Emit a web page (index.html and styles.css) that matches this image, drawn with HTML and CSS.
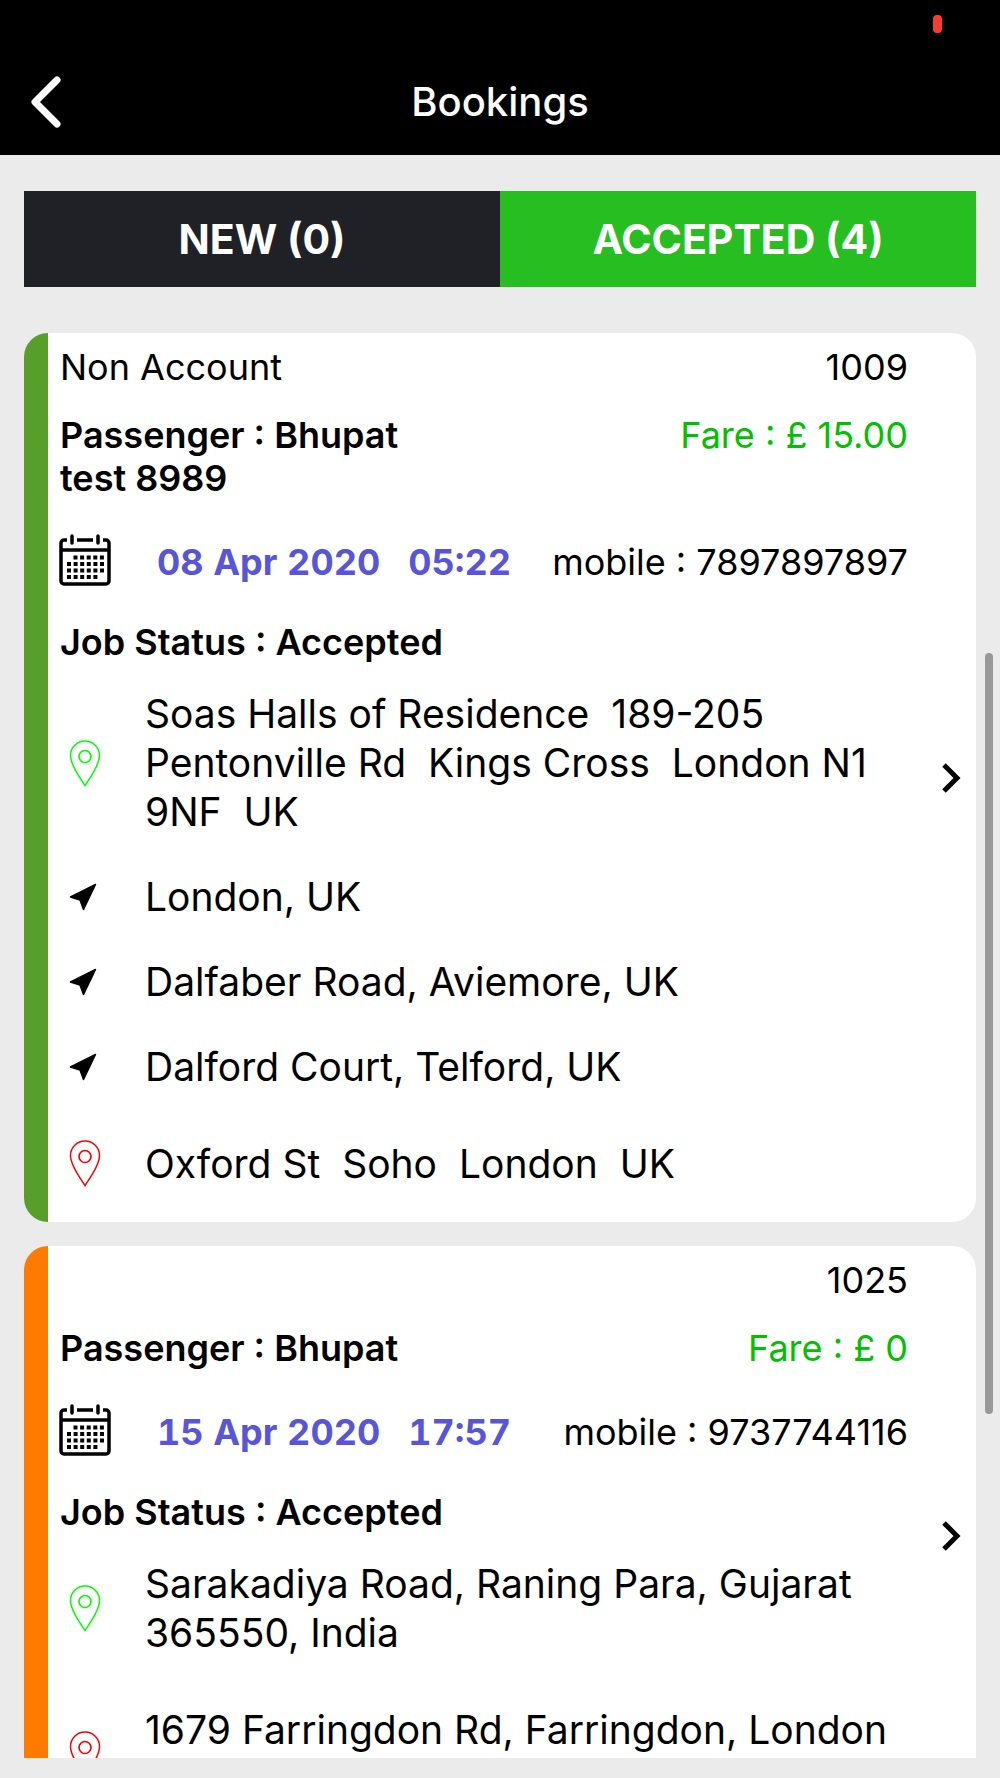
FILE: index.html
```
<!DOCTYPE html>
<html lang="en">
<head>
    <meta charset="UTF-8">
    <meta name="viewport" content="width=device-width, initial-scale=1.0">
    <title>Bookings</title>
    <link rel="stylesheet" href="styles.css">
</head>
<body>
    <!-- shared icons -->
    <svg class="icon-defs" aria-hidden="true">
        <symbol id="calendar" viewBox="0 0 52 52">
            <path d="M8 6H5a3 3 0 0 0-3 3v38a3 3 0 0 0 3 3h42a3 3 0 0 0 3-3V9a3 3 0 0 0-3-3h-3M18 6h16M2 16h48" fill="none" stroke="#000" stroke-width="3.500"/>
            <path d="M13 2v7M39 2v7" fill="none" stroke="#000" stroke-width="3.500" stroke-linecap="round"/>
            <path d="M14.500 23.500H46M8 30H46M8 36.500H46M8 43H40" fill="none" stroke="#000" stroke-width="4" stroke-dasharray="4 2.600"/>
        </symbol>
        <symbol id="pin" viewBox="0 0 32 48">
            <path d="M16 46.500C12 40 1.500 27 1.500 16.500a14.500 14.500 0 0 1 29 0C30.500 27 20 40 16 46.500Z" fill="none" stroke="currentColor" stroke-width="1.500"/>
            <circle cx="16" cy="17.500" r="6" fill="none" stroke="currentColor" stroke-width="1.700"/>
        </symbol>
        <symbol id="arrow" viewBox="0 0 28 28">
            <path d="M26.500 1.500 14.500 26.500 11 17 1.500 14Z" fill="#000" stroke="#000" stroke-width="1.500" stroke-linejoin="round"/>
        </symbol>
        <symbol id="chevron" viewBox="0 0 20 32">
            <path d="M3 3 16 16 3 29" fill="none" stroke="#000" stroke-width="5"/>
        </symbol>
    </svg>

    <header class="header">
        <div class="status-bar"><span class="recording"></span></div>
        <div class="nav">
            <button type="button" class="back" aria-label="Back">
                <svg width="32" height="52" viewBox="0 0 32 52"><path d="M27 4 5 26 27 48" fill="none" stroke="#fff" stroke-width="7" stroke-linecap="round" stroke-linejoin="round"/></svg>
            </button>
            <h1>Bookings</h1>
        </div>
    </header>

    <div class="tabs">
        <button type="button" class="tab">NEW (0)</button>
        <button type="button" class="tab active">ACCEPTED (4)</button>
    </div>

    <main class="bookings">
        <div class="list">
            <article class="card green">
                <div class="details">
                    <div class="row"><span>Non Account</span><span class="right">1009</span></div>
                    <div class="row"><strong class="passenger">Passenger : Bhupat test 8989</strong><span class="right fare">Fare : £ 15.00</span></div>
                    <div class="row when">
                        <svg class="calendar"><use href="#calendar"/></svg>
                        <span class="date">08 Apr 2020</span>
                        <span class="time">05:22</span>
                        <span class="right">mobile : 7897897897</span>
                    </div>
                    <div class="row job"><strong>Job Status : Accepted</strong></div>
                    <div class="stop pickup"><svg class="pin"><use href="#pin"/></svg><p>Soas Halls of Residence  189-205 Pentonville Rd  Kings Cross  London N1 9NF  UK</p></div>
                    <div class="stop via"><svg class="arrow"><use href="#arrow"/></svg><p>London, UK</p></div>
                    <div class="stop via"><svg class="arrow"><use href="#arrow"/></svg><p>Dalfaber Road, Aviemore, UK</p></div>
                    <div class="stop via"><svg class="arrow"><use href="#arrow"/></svg><p>Dalford Court, Telford, UK</p></div>
                    <div class="stop drop"><svg class="pin"><use href="#pin"/></svg><p>Oxford St  Soho  London  UK</p></div>
                </div>
                <button type="button" class="open" aria-label="Open booking 1009"><svg class="chevron"><use href="#chevron"/></svg></button>
            </article>

            <article class="card orange">
                <div class="details">
                    <div class="row"><span class="right">1025</span></div>
                    <div class="row"><strong class="passenger">Passenger : Bhupat</strong><span class="right fare">Fare : £ 0</span></div>
                    <div class="row when">
                        <svg class="calendar"><use href="#calendar"/></svg>
                        <span class="date">15 Apr 2020</span>
                        <span class="time">17:57</span>
                        <span class="right">mobile : 9737744116</span>
                    </div>
                    <div class="row job"><strong>Job Status : Accepted</strong></div>
                    <div class="stop pickup"><svg class="pin"><use href="#pin"/></svg><p>Sarakadiya Road, Raning Para, Gujarat 365550, India</p></div>
                    <div class="stop drop"><svg class="pin"><use href="#pin"/></svg><p>1679 Farringdon Rd, Farringdon, London</p></div>
                </div>
                <button type="button" class="open" aria-label="Open booking 1025"><svg class="chevron"><use href="#chevron"/></svg></button>
            </article>
        </div>
        <span class="scroll-thumb"></span>
    </main>
</body>
</html>
```
FILE: styles.css
```
* {
    box-sizing: border-box;
}
body {
    font-family: Inter, "Liberation Sans", sans-serif;
    margin: 0;
    height: 100vh;
    display: flex;
    flex-direction: column;
    overflow: hidden;
    background-color: #ebebeb;
    color: #000;
    font-size: 36px;
    line-height: 43px;
}
button {
    font-family: inherit;
    border: none;
    padding: 0;
    background: none;
    cursor: pointer;
}
.icon-defs {
    position: absolute;
    width: 0;
    height: 0;
}
.header {
    flex: none;
    background-color: #000;
    color: #fff;
}
.status-bar {
    height: 48px;
    padding: 15px 58px 0;
    display: flex;
    justify-content: flex-end;
}
.recording {
    width: 9px;
    height: 18px;
    border-radius: 4px;
    background-color: #ff3b30;
}
.nav {
    height: 107px;
    padding: 0 30px;
    display: grid;
    grid-template-columns: 60px 1fr 60px;
    align-items: center;
}
.back {
    display: flex;
}
.nav h1 {
    margin: 0;
    font-size: 40px;
    font-weight: 500;
    text-align: center;
}
.tabs {
    flex: none;
    display: flex;
    margin: 36px 24px 46px;
}
.tab {
    flex: 1;
    height: 96px;
    font-size: 41px;
    font-weight: 700;
    color: #fff;
    background-color: #202126;
}
.tab.active {
    background-color: #27be21;
}
.bookings {
    flex: 1;
    min-height: 0;
    position: relative;
    padding: 0 24px 20px;
}
.list {
    height: 100%;
    overflow: hidden;
}
.card {
    display: flex;
    margin-bottom: 24px;
    border-left: 24px solid;
    border-radius: 24px;
    background-color: #fff;
}
.card.green {
    border-color: #579e2b;
}
.card.orange {
    border-color: #ff7b00;
}
.details {
    flex: 1;
    padding: 13px 0 23px 12px;
}
.row {
    display: flex;
    margin-bottom: 25px;
}
.row strong {
    font-weight: 600;
}
.right {
    margin-left: auto;
    text-align: right;
}
.passenger {
    width: 45%;
}
.fare {
    color: #00c100;
}
.when {
    align-items: center;
    height: 56px;
    margin: 34px 0 31px;
}
.calendar {
    width: 52px;
    height: 52px;
    margin: 0 46px 4px -1px;
}
.date,
.time {
    font-weight: 700;
    font-variant-numeric: tabular-nums;
    color: #5856d6;
}
.time {
    margin-left: 28px;
}
.stop {
    display: flex;
    align-items: center;
    margin-top: 36px;
    font-size: 39px;
    line-height: 49px;
}
.stop p {
    margin: 0;
    color: #000;
    white-space: pre-wrap;
}
.stop svg {
    flex: none;
}
.pickup {
    margin-top: 0;
    color: #0f0;
}
.drop {
    min-height: 72px;
    color: #f00;
}
.pickup + .drop {
    min-height: 98px;
    margin-top: 48px;
}
.pickup + .drop p {
    align-self: flex-start;
}
.pin {
    width: 32px;
    height: 48px;
    margin: 0 44px 0 9px;
}
.arrow {
    width: 28px;
    height: 28px;
    margin: 0 48px 0 9px;
}
.open {
    width: 68px;
    display: flex;
    align-items: center;
    justify-content: center;
    padding-left: 18px;
}
.chevron {
    width: 20px;
    height: 32px;
}
.scroll-thumb {
    position: absolute;
    top: 320px;
    right: 7px;
    width: 8px;
    height: 761px;
    border-radius: 4px;
    background-color: #999;
}
```
